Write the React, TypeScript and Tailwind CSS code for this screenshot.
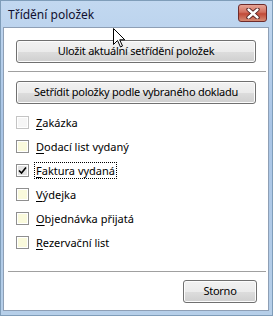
import React from 'react';

const font = { fontFamily: '"Noto Sans", "Open Sans", sans-serif' };

const items = [
  { label: 'Zakázka', checked: false, state: 'hover' },
  { label: 'Dodací list vydaný', checked: false, state: 'normal' },
  { label: 'Faktura vydaná', checked: true, state: 'focus' },
  { label: 'Výdejka', checked: false, state: 'normal' },
  { label: 'Objednávka přijatá', checked: false, state: 'normal' },
  { label: 'Rezervační list', checked: false, state: 'normal' },
];

const Button = ({ children, className }: { children: React.ReactNode; className?: string }) => (
  <div
    className={`h-[23px] flex items-center justify-center rounded-[3px] border border-[#707070] text-[11px] tracking-[-0.25px] text-black bg-[linear-gradient(to_bottom,#f2f2f2_0%,#ebebeb_50%,#dddddd_51%,#cfcfcf_100%)] shadow-[inset_0_0_0_1px_#fcfcfc] ${className ?? ''}`}
  >
    {children}
  </div>
);

const CheckRow = ({ label, checked, state }: { label: string; checked: boolean; state: string }) => {
  const boxBorder = state === 'hover' ? 'border-[#c4c4c4]' : 'border-[#8f8f8f]';
  const boxFill =
    state === 'hover'
      ? 'bg-[#f6f6f6]'
      : checked
      ? 'bg-[#e4e4e4]'
      : 'bg-[#fafadc]';
  return (
    <div className="h-6 flex items-center pl-3">
      <div className={`w-[13px] h-[13px] border ${boxBorder} bg-white p-px flex-none`}>
        <div className={`w-full h-full ${boxFill} flex items-center justify-center`}>
          {checked && (
            <svg width="9" height="9" viewBox="0 0 9 9">
              <path d="M1 4.5 L3.5 7 L8 1.5" fill="none" stroke="#000" strokeWidth="1.6" />
            </svg>
          )}
        </div>
      </div>
      <span
        className={`ml-[6px] text-[11px] leading-[15px] text-black px-px ${
          state === 'focus' ? 'outline outline-1 outline-dotted outline-black' : ''
        }`}
      >
        <span className="underline underline-offset-2">{label[0]}</span>
        {label.slice(1)}
      </span>
    </div>
  );
};

export default function App() {
  return (
    <div style={font} className="relative w-[273px] h-[316px] flex flex-col border border-[#7f9db9] bg-[linear-gradient(to_bottom,#c2d8f0,#a9c5e6_40%,#b6cfe9)] overflow-hidden">
      <div className="h-[26px] flex items-center justify-between pl-[7px] pr-[5px] flex-none">
        <span className="text-[12px] text-[#101030] mt-[2px]">Třídění položek</span>
        <div className="w-[29px] h-[18px] mt-[-2px] rounded-[3px] border border-[#6e2b2b] bg-[linear-gradient(to_bottom,#e6a597,#d2705f_45%,#c14a38_55%,#d58b74)] flex items-center justify-center">
          <svg width="14" height="11" viewBox="0 0 14 11">
            <path d="M2.5 1.5 L11.5 9.5 M11.5 1.5 L2.5 9.5" stroke="#4a1a1a" strokeWidth="4.2" strokeLinecap="round" />
            <path d="M2.5 1.5 L11.5 9.5 M11.5 1.5 L2.5 9.5" stroke="#fff" strokeWidth="2.4" strokeLinecap="round" />
          </svg>
        </div>
      </div>
      <div className="flex-1 ml-[2px] mr-[3px] mb-[4px] border border-[#8e9fb5] bg-white flex flex-col">
        <div className="px-3 pt-3">
          <Button>Uložit aktuální setřídění položek</Button>
        </div>
        <div className="mt-2 ml-1 mr-[2px] h-px bg-[#a0a0a0]" />
        <div className="px-3 mt-[9px]">
          <Button>Setřídit položky podle vybraného dokladu</Button>
        </div>
        <div className="mt-[6px] flex flex-col">
          {items.map((it) => (
            <CheckRow key={it.label} {...it} />
          ))}
        </div>
        <div className="flex-1" />
        <div className="ml-1 mr-[2px] h-px bg-[#a0a0a0]" />
        <div className="flex justify-end pr-[11px] pt-2 pb-[7px]">
          <Button className="w-[74px]">Storno</Button>
        </div>
      </div>
      <svg className="absolute left-[112px] top-[27px]" width="13" height="20" viewBox="0 0 13 20">
        <path d="M0.5 0.5 L0.5 16.5 L4.5 12.5 L7.5 19 L9.5 18 L6.7 11.8 L11.8 11.8 Z" fill="#fff" stroke="#000" strokeWidth="1" strokeLinejoin="miter" />
      </svg>
    </div>
  );
}
